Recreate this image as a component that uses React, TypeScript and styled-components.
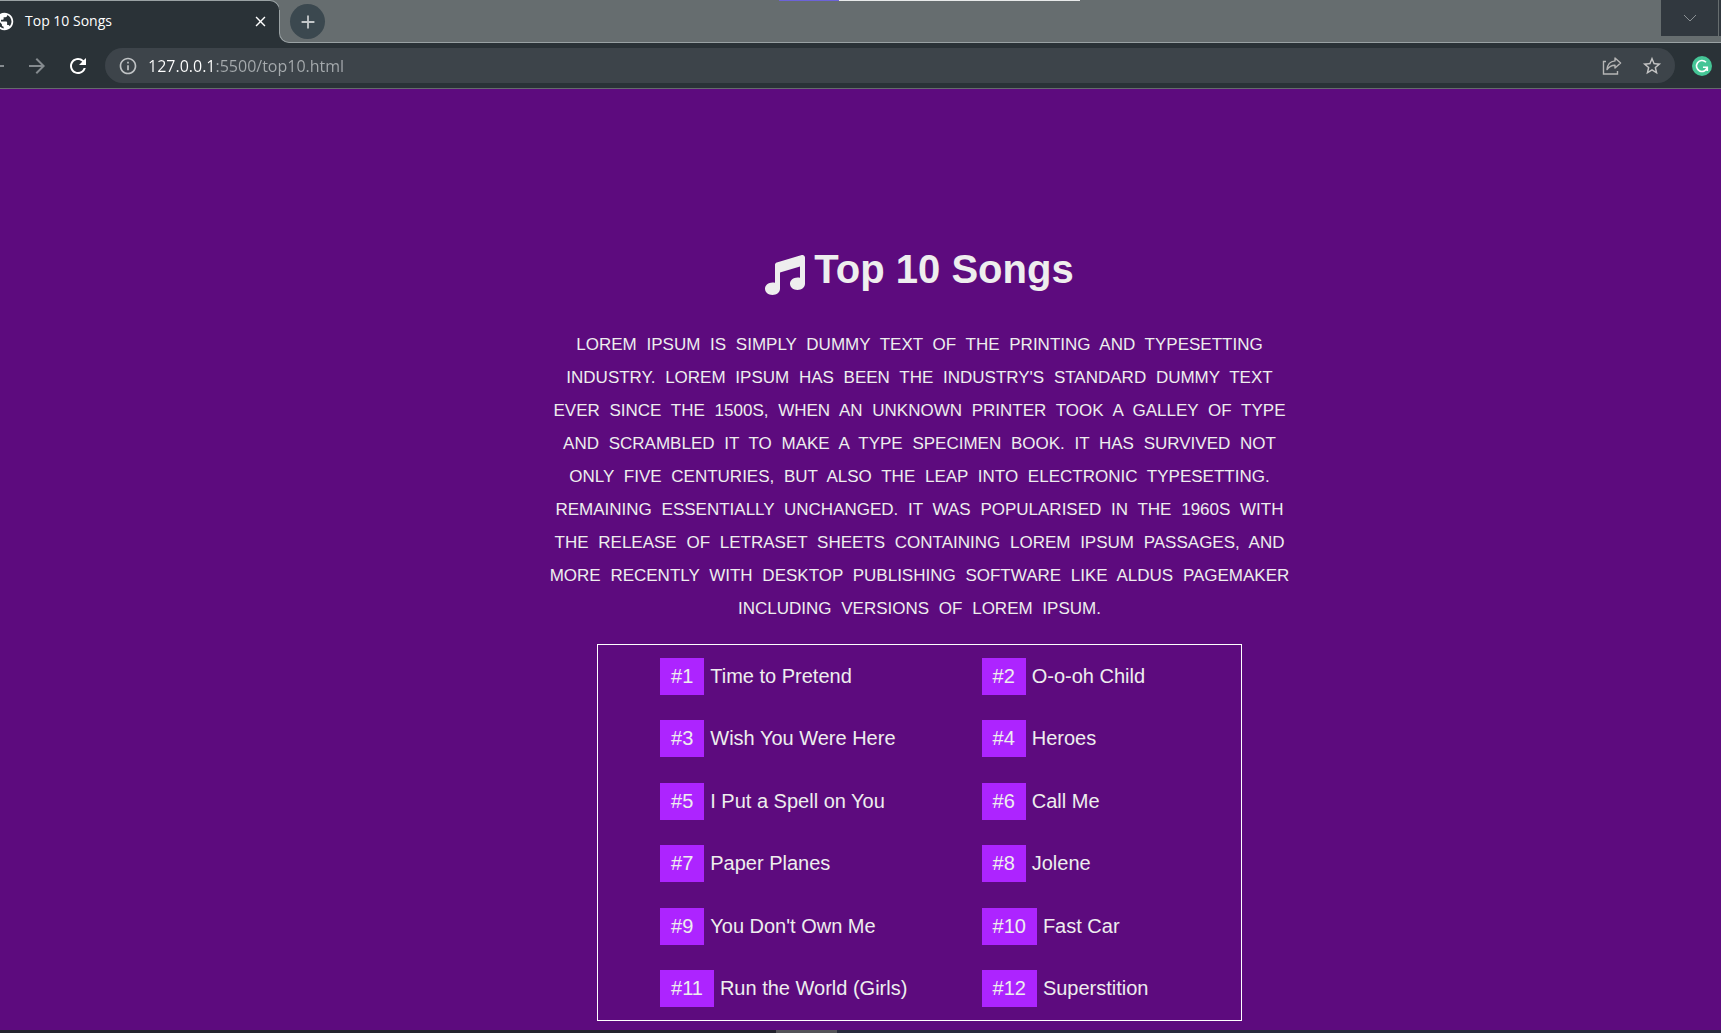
import React from "react";
import styled, { createGlobalStyle } from "styled-components";
import {
  MdAdd,
  MdArrowBack,
  MdArrowForward,
  MdClose,
  MdInfoOutline,
  MdPublic,
  MdRefresh,
  MdStarBorder,
} from "react-icons/md";
import { FaMusic } from "react-icons/fa6";

const color = {
  frame: "#666d6f",
  edge: "#9aa2a4",
  toolbar: "#2a3237",
  field: "#3d444a",
  page: "#5d0b7e",
  badge: "#ad24ff",
  text: "#eeeeee",
};

const GlobalStyle = createGlobalStyle`
  *, *::before, *::after { box-sizing: border-box; }
  body { margin: 0; background: ${color.page}; }
  button { border: 0; padding: 0; background: none; color: inherit; font: inherit; }
`;

const Window = styled.div`
  display: flex;
  flex-direction: column;
  min-height: 100vh;
  overflow: hidden;
  font-family: "Open Sans", "Noto Sans", sans-serif;
`;

const Strip = styled.header`
  position: relative;
  display: flex;
  height: 43px;
  background: linear-gradient(${color.frame} 20px, ${color.toolbar} 20px);
`;

const Tab = styled.div`
  display: flex;
  align-items: center;
  width: 280px;
  height: 33px;
  padding: 8px 11px 0 0;
  border: solid ${color.edge};
  border-width: 1px 1px 0 0;
  border-top-right-radius: 10px;
  background: ${color.toolbar};
  color: #ffffff;
`;

const Favicon = styled(MdPublic)`
  flex: none;
  margin: 0 10px 0 -6px;
`;

const TabTitle = styled.span`
  flex: 1;
  font-size: 14px;
  line-height: 20px;
`;

const IconButton = styled.button<{ $size: number; $tone?: string }>`
  display: grid;
  flex: none;
  place-items: center;
  width: ${(p) => p.$size}px;
  height: ${(p) => p.$size}px;
  border-radius: 50%;
  color: ${(p) => p.$tone ?? "#ffffff"};
`;

const StripRest = styled.div`
  position: relative;
  display: flex;
  flex: 1;
  align-items: flex-start;
  justify-content: space-between;
  margin-left: -1px;
  border: solid ${color.edge};
  border-width: 0 0 1px 1px;
  border-bottom-left-radius: 10px;
  background: ${color.frame};

  &::before {
    content: "";
    position: absolute;
    top: 0;
    left: -1px;
    width: 1px;
    height: 10px;
    background: ${color.frame};
  }
`;

const NewTab = styled(IconButton)`
  margin: 4px 0 0 10px;
  background: #3b484f;
`;

const WindowControls = styled.div`
  display: flex;
  gap: 1px;
  padding-right: 1px;
  background: linear-gradient(${color.frame}, ${color.frame});
  border-right: 2px solid #31383f;
`;

const WindowButton = styled.button`
  display: grid;
  place-items: center;
  width: 57px;
  height: 36px;
  background: #31383f;
  color: #8b9195;
`;

const TopMarker = styled.div`
  position: absolute;
  top: 0;
  left: 779px;
  width: 301px;
  height: 1px;
  background: linear-gradient(90deg, #6c63d8 60px, #e8eaea 60px);
`;

const Toolbar = styled.nav`
  display: flex;
  align-items: center;
  height: 46px;
  padding: 0 9px 0 0;
  border-bottom: 1px solid #656b6d;
  background: ${color.toolbar};
`;

const NavButtons = styled.div`
  display: flex;
  gap: 17px;
  margin-left: -16px;
  padding-right: 15px;
`;

const Omnibox = styled.div`
  display: flex;
  flex: 1;
  align-items: center;
  height: 35px;
  margin-right: 17px;
  padding: 0 11px 0 13px;
  border-radius: 18px;
  background: ${color.field};
`;

/* The host is drawn brighter than the port and path behind it. */
const Address = styled.input`
  flex: 1;
  min-width: 0;
  margin-left: 10px;
  padding: 0;
  border: 0;
  outline: 0;
  background: linear-gradient(90deg, #ffffff 68px, #a6abae 68px);
  background-clip: text;
  color: #ffffff;
  -webkit-text-fill-color: transparent;
  font-family: inherit;
  font-size: 16px;
  line-height: 24px;
`;

const PageActions = styled.div`
  display: flex;
  align-items: center;
  gap: 18px;
`;

const Page = styled.main`
  display: flex;
  flex: 1;
  flex-direction: column;
  align-items: center;
  padding: 152px 0 9px 118px;
  color: ${color.text};
  font-family: "Liberation Sans", Arial, sans-serif;
`;

const Title = styled.h1`
  display: flex;
  gap: 9px;
  margin: 0 0 31px;
  font-size: 40px;
  line-height: 56px;

  svg {
    margin-top: 14px;
  }
`;

const Intro = styled.p`
  width: 740px;
  margin: 0 0 19px;
  font-size: 17px;
  line-height: 33px;
  text-align: center;
  text-transform: uppercase;
  word-spacing: 5px;
`;

const Line = styled.span`
  display: block;
  white-space: nowrap;
`;

const Songs = styled.ol`
  display: grid;
  flex: 1;
  grid-template-columns: 1fr 1fr;
  grid-auto-rows: 1fr;
  width: 645px;
  margin: 0;
  padding: 0;
  border: 1px solid #ffffff;
  list-style: none;
`;

const Song = styled.li`
  display: flex;
  align-items: center;
  gap: 6px;
  padding-left: 62px;
  font-size: 20px;
  line-height: 37px;
`;

const Rank = styled.span`
  padding: 0 11px;
  background: ${color.badge};
`;

const BottomEdge = styled.footer`
  height: 3px;
  background: linear-gradient(90deg, #23232d 776px, #545458 776px, #545458 837px, #272a3c 837px);
`;

const intro = [
  "Lorem Ipsum is simply dummy text of the printing and typesetting",
  "industry. Lorem Ipsum has been the industry's standard dummy text",
  "ever since the 1500s, when an unknown printer took a galley of type",
  "and scrambled it to make a type specimen book. It has survived not",
  "only five centuries, but also the leap into electronic typesetting.",
  "remaining essentially unchanged. It was popularised in the 1960s with",
  "the release of Letraset sheets containing Lorem Ipsum passages, and",
  "more recently with desktop publishing software like Aldus PageMaker",
  "including versions of Lorem Ipsum.",
];

const songs = [
  "Time to Pretend",
  "O-o-oh Child",
  "Wish You Were Here",
  "Heroes",
  "I Put a Spell on You",
  "Call Me",
  "Paper Planes",
  "Jolene",
  "You Don't Own Me",
  "Fast Car",
  "Run the World (Girls)",
  "Superstition",
];

const ShareIcon = () => (
  <svg width="20" height="20" viewBox="0 0 20 20" fill="none" stroke="currentColor" strokeWidth="1.4">
    <path d="M4 5.5H1.5V18H15.5V15" />
    <path d="M13 2L18.6 7L13 12V9.2C9.4 9.2 7 10.6 5 13.6C5.4 8.6 8.2 5.4 13 4.9Z" strokeLinejoin="round" />
  </svg>
);

const GrammarIcon = () => (
  <svg width="20" height="20" viewBox="0 0 20 20" fill="none">
    <circle cx="10" cy="10" r="10" fill="#45c596" />
    <path d="M14 6.2A5.5 5.5 0 1 0 15.3 11.3M11 11.2H15.3V15" stroke="#ffffff" strokeWidth="1.6" />
  </svg>
);

export default function App() {
  return (
    <>
      <GlobalStyle />
      <Window>
        <Strip>
          <Tab>
            <Favicon size={21} />
            <TabTitle>Top 10 Songs</TabTitle>
            <IconButton $size={16} aria-label="Close tab">
              <MdClose size={17} />
            </IconButton>
          </Tab>
          <StripRest>
            <NewTab $size={35} $tone="#c3c7c9" aria-label="New tab">
              <MdAdd size={22} />
            </NewTab>
            <WindowControls>
              <WindowButton aria-label="Search tabs">
                <svg width="14" height="8" viewBox="0 0 14 8" fill="none" stroke="currentColor">
                  <path d="M1 1L7 7L13 1" />
                </svg>
              </WindowButton>
            </WindowControls>
          </StripRest>
          <TopMarker />
        </Strip>
        <Toolbar>
          <NavButtons>
            <IconButton $size={24} $tone="#858b8f" aria-label="Back">
              <MdArrowBack size={24} />
            </IconButton>
            <IconButton $size={24} $tone="#858b8f" aria-label="Forward">
              <MdArrowForward size={24} />
            </IconButton>
            <IconButton $size={24} aria-label="Reload">
              <MdRefresh size={24} />
            </IconButton>
          </NavButtons>
          <Omnibox>
            <IconButton $size={20} $tone="#c0c3c5" aria-label="Site information">
              <MdInfoOutline size={20} />
            </IconButton>
            <Address aria-label="Address" defaultValue="127.0.0.1:5500/top10.html" spellCheck={false} />
            <PageActions>
              <IconButton $size={20} $tone="#b5b5b5" aria-label="Share page">
                <ShareIcon />
              </IconButton>
              <IconButton $size={24} $tone="#c4c4c4" aria-label="Bookmark page">
                <MdStarBorder size={22} />
              </IconButton>
            </PageActions>
          </Omnibox>
          <IconButton $size={20} aria-label="Grammar extension">
            <GrammarIcon />
          </IconButton>
        </Toolbar>
        <Page>
          <Title>
            <FaMusic />
            Top 10 Songs
          </Title>
          <Intro>
            {intro.map((line) => (
              <Line key={line}>{line} </Line>
            ))}
          </Intro>
          <Songs>
            {songs.map((song, i) => (
              <Song key={song}>
                <Rank>#{i + 1}</Rank>
                {song}
              </Song>
            ))}
          </Songs>
        </Page>
        <BottomEdge />
      </Window>
    </>
  );
}
